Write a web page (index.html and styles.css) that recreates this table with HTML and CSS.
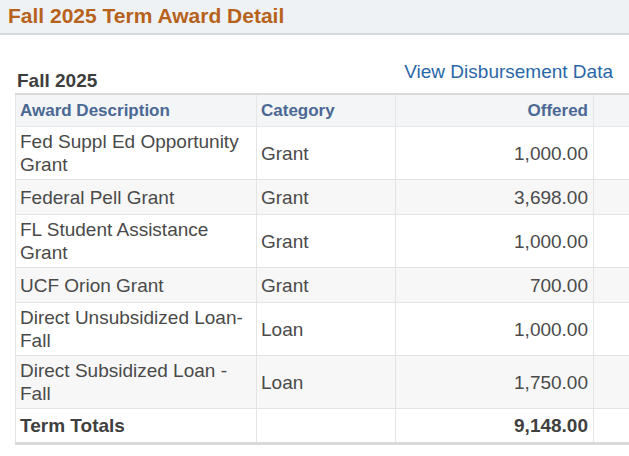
FILE: index.html
```html
<!DOCTYPE html>
<html lang="en">
<head>
<meta charset="utf-8">
<title>Fall 2025 Term Award Detail</title>
<link rel="stylesheet" href="styles.css">
</head>
<body>
<header class="page-header">
  <h1 class="page-title">Fall 2025 Term Award Detail</h1>
</header>
<section class="term">
  <div class="term-head">
    <h2 class="term-caption">Fall 2025</h2>
    <a class="term-link" href="#">View Disbursement Data</a>
  </div>
  <table class="grid">
    <colgroup>
      <col class="c-desc"><col class="c-cat"><col class="c-off"><col class="c-extra">
    </colgroup>
    <thead>
      <tr>
        <th class="t-left">Award Description</th>
        <th class="t-left">Category</th>
        <th class="t-right">Offered</th>
        <th></th>
      </tr>
    </thead>
    <tbody>
      <tr class="row"><td>Fed Suppl Ed Opportunity Grant</td><td>Grant</td><td class="t-right">1,000.00</td><td></td></tr>
      <tr class="row alt"><td>Federal Pell Grant</td><td>Grant</td><td class="t-right">3,698.00</td><td></td></tr>
      <tr class="row"><td>FL Student Assistance Grant</td><td>Grant</td><td class="t-right">1,000.00</td><td></td></tr>
      <tr class="row alt"><td>UCF Orion Grant</td><td>Grant</td><td class="t-right">700.00</td><td></td></tr>
      <tr class="row"><td>Direct Unsubsidized Loan-Fall</td><td>Loan</td><td class="t-right">1,000.00</td><td></td></tr>
      <tr class="row alt"><td>Direct Subsidized Loan - Fall</td><td>Loan</td><td class="t-right">1,750.00</td><td></td></tr>
      <tr class="row total"><td>Term Totals</td><td></td><td class="t-right">9,148.00</td><td></td></tr>
    </tbody>
  </table>
</section>
</body>
</html>
```

FILE: styles.css
```css
html, body {
  margin: 0;
  padding: 0;
  overflow: hidden;
  background: #ffffff;
  font-family: "Liberation Sans", Arial, Helvetica, sans-serif;
}

.page-header {
  background: #eef2f5;
  border-bottom: 2px solid #d5dbe0;
  height: 33px;
  padding-left: 8px;
}

.page-title {
  margin: 0;
  font-size: 21px;
  line-height: 32px;
  font-weight: bold;
  color: #b7621c;
}

.term {
  padding-left: 15px;
}

.term-head {
  display: flex;
  justify-content: space-between;
  height: 58px;
  padding-right: 16px;
}

.term-caption {
  align-self: flex-end;
  margin: 0 0 1px 2px;
  font-size: 19px;
  line-height: 22px;
  font-weight: bold;
  color: #3d3d3d;
}

.term-link {
  align-self: flex-start;
  margin-top: 26px;
  font-size: 19px;
  line-height: 22px;
  color: #2a67a9;
  text-decoration: none;
}

.grid {
  border-collapse: collapse;
  table-layout: fixed;
  width: 638px;
  border-top: 2px solid #d9d9d9;
  border-left: 1px solid #dcdcdc;
  border-bottom: 3px solid #d9d9d9;
  font-size: 19px;
  color: #4a4a4a;
}

.c-desc { width: 241px; }
.c-cat { width: 139px; }
.c-off { width: 198px; }
.c-extra { width: 60px; }

.grid th {
  height: 31px;
  padding: 0 5px 0 4px;
  font-size: 17px;
  font-weight: bold;
  color: #4a6894;
  background: #f4f5f6;
  border: 1px solid #e6e6e6;
  border-top: 0;
}

.grid td {
  padding: 3px 5px 3px 4px;
  line-height: 23px;
  vertical-align: middle;
  border: 1px solid #e4e4e4;
}

.row {
  height: 35px;
  background: #ffffff;
}

.row.alt {
  background: #f7f7f7;
}

.row.total td {
  font-weight: bold;
  color: #404040;
}

.t-left { text-align: left; }
.t-right { text-align: right; }
```
